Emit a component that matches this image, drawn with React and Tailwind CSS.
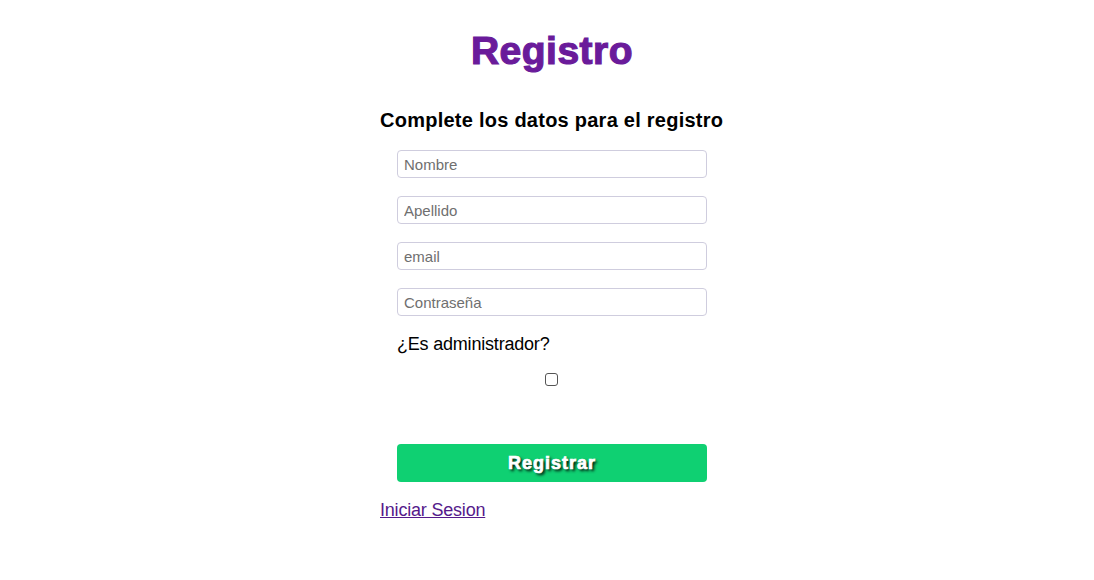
import React, { useState } from 'react';

const inputClass =
  'block w-[310px] h-[28px] mx-auto px-[6px] border border-[#cfcdde] rounded-[4px] bg-white text-[15px] text-black placeholder:text-[#6f6f6f] focus:outline-none';

const App = () => {
  const [form, setForm] = useState({ nombre: '', apellido: '', email: '', password: '', admin: false });

  const handleChange = (e) => {
    const { name, value, type, checked } = e.target;
    setForm({ ...form, [name]: type === 'checkbox' ? checked : value });
  };

  return (
    <div className="min-h-[580px] bg-white pl-[10px] font-['Liberation_Sans',Arial,sans-serif]">
      <h1 className="pt-[28px] text-center text-[39px] leading-[45px] font-bold tracking-[0.5px] text-[#6a1b9a] [-webkit-text-stroke:1.2px_#6a1b9a]">
        Registro
      </h1>
      <form onSubmit={(e) => e.preventDefault()} className="w-[344px] mx-auto mt-[35px]">
        <h2 className="whitespace-nowrap text-[20px] leading-[24px] font-bold tracking-[0.25px] text-black">Complete los datos para el registro</h2>
        <div className="mt-[18px] flex flex-col gap-[18px]">
          <input name="nombre" type="text" placeholder="Nombre" value={form.nombre} onChange={handleChange} className={inputClass} />
          <input name="apellido" type="text" placeholder="Apellido" value={form.apellido} onChange={handleChange} className={inputClass} />
          <input name="email" type="email" placeholder="email" value={form.email} onChange={handleChange} className={inputClass} />
          <input name="password" type="password" placeholder="Contraseña" value={form.password} onChange={handleChange} className={inputClass} />
        </div>
        <label htmlFor="admin" className="block mt-[17px] ml-[17px] text-[18px] leading-[22px] tracking-[-0.2px] text-black">
          ¿Es administrador?
        </label>
        <div className="mt-[18px] flex justify-center">
          <input
            id="admin"
            name="admin"
            type="checkbox"
            checked={form.admin}
            onChange={handleChange}
            className="appearance-none w-[13px] h-[13px] border border-[#555] rounded-[3px] bg-white ml-[-2px]"
          />
        </div>
        <button
          type="submit"
          className="block mx-auto mt-[58px] w-[310px] h-[38px] rounded-[4px] bg-[#0fd072] text-white text-[18px] font-bold tracking-[1px] [-webkit-text-stroke:0.7px_#fff] [text-shadow:2px_2px_3px_#000]"
        >
          Registrar
        </button>
        <a href="#" className="inline-block mt-[17px] text-[18px] leading-[22px] tracking-[-0.2px] text-[#551a8b] underline">
          Iniciar Sesion
        </a>
      </form>
    </div>
  );
};

export default App;
